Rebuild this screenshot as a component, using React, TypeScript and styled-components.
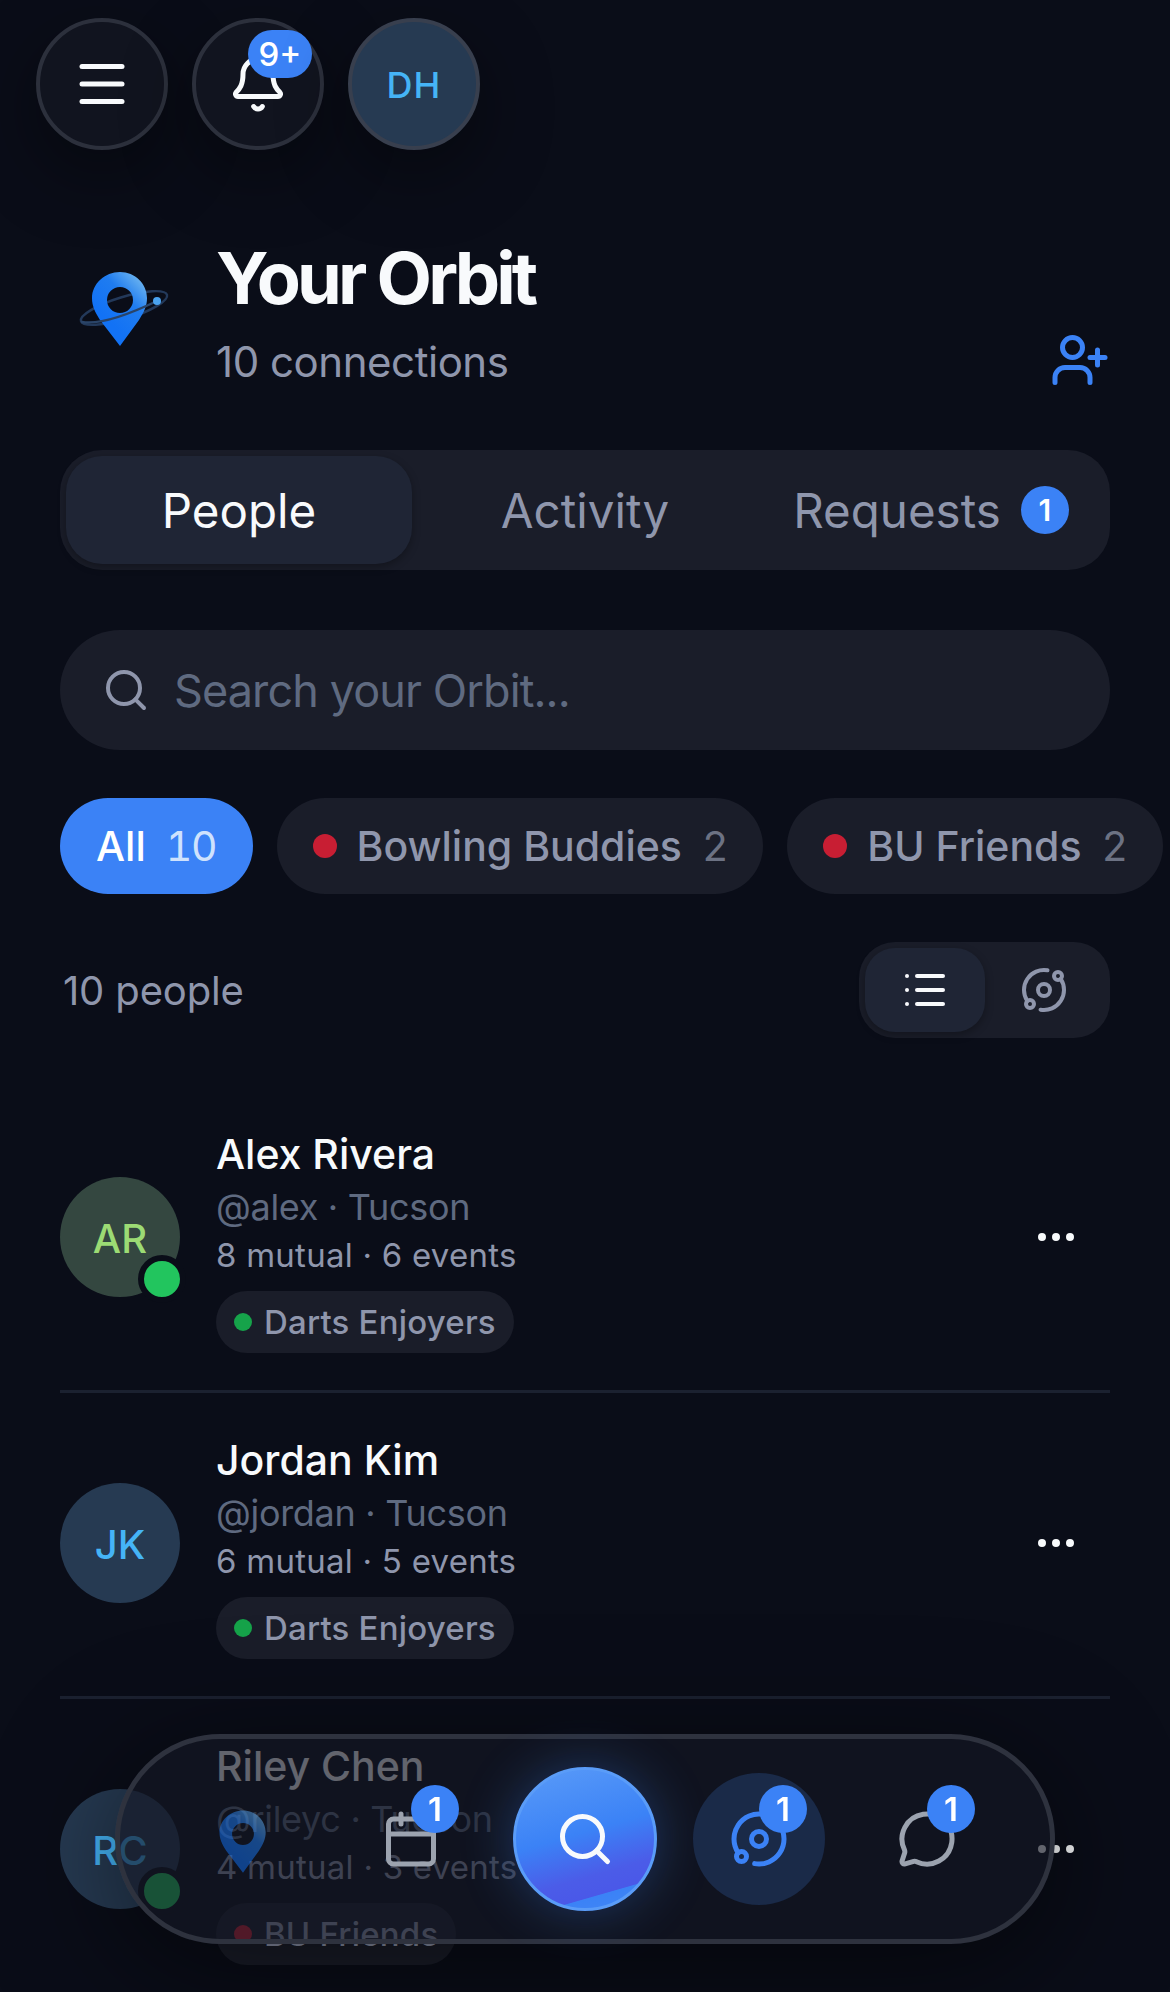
import React from "react";
import styled, { createGlobalStyle } from "styled-components";
import { Menu, Bell, UserPlus, Search, List, Orbit, Ellipsis, Calendar, MessageCircle } from "lucide-react";

const Global = createGlobalStyle`
  html, body { margin: 0; padding: 0; background: #0a0d18; }
  body { font-family: Inter, "Liberation Sans", sans-serif; color: #f8fafc; }
  * { box-sizing: border-box; }
  #root { width: 1170px; height: 1992px; overflow: hidden; position: relative; }
`;

const Page = styled.div`
  display: flex;
  flex-direction: column;
  width: 1170px;
`;

const TopBar = styled.div`
  display: flex;
  gap: 24px;
  padding: 18px 36px 0;
`;

const RoundButton = styled.div`
  position: relative;
  width: 132px;
  height: 132px;
  border-radius: 50%;
  background: #11141f;
  border: 4px solid #2c303c;
  box-shadow: 0 24px 72px rgba(0, 0, 0, 0.4);
  display: flex;
  align-items: center;
  justify-content: center;
  color: #f8fafc;
`;

const UserButton = styled(RoundButton)`
  background: #263a52;
  border-color: #383f4e;
  color: #45b4f6;
  font-size: 36px;
  font-weight: 500;
  letter-spacing: 1px;
  padding-top: 2px;
`;

const Badge = styled.span`
  position: absolute;
  height: 48px;
  min-width: 48px;
  border-radius: 24px;
  background: #3b82f6;
  color: #fff;
  font-size: 33px;
  font-weight: 600;
  display: flex;
  align-items: center;
  justify-content: center;
`;

const BellBadge = styled(Badge)`
  width: 64px;
  top: 8px;
  right: 8px;
  font-weight: 500;
`;

const Header = styled.div`
  display: flex;
  padding: 0 60px;
  margin-top: 89px;
  height: 176px;
`;

const LogoBox = styled.div`
  width: 156px;
  flex: none;
  padding: 30px 0 0 10px;
`;

const HeaderText = styled.div`
  flex: 1;
  display: flex;
  flex-direction: column;
`;

const Title = styled.h1`
  margin: 0;
  font-size: 72px;
  line-height: 78px;
  font-weight: 700;
  letter-spacing: -3.9px;
  color: #f8fafc;
`;

const Subtitle = styled.div`
  margin-top: 15px;
  font-size: 42px;
  line-height: 60px;
  letter-spacing: -0.45px;
  color: #8f96ac;
`;

const AddFriend = styled.div`
  align-self: flex-end;
  color: #3b82f6;
  height: 60px;
  margin-bottom: 25px;
`;

const Tabs = styled.div`
  margin: 35px 60px 0;
  height: 120px;
  border-radius: 42px;
  background: #1a1d29;
  padding: 6px;
  display: flex;
`;

const Tab = styled.div<{ $active?: boolean }>`
  flex: 1;
  border-radius: 36px;
  display: flex;
  align-items: center;
  justify-content: center;
  gap: 20px;
  font-size: 47.5px;
  font-weight: 400;
  color: ${(p) => (p.$active ? "#f8fafc" : "#8f96ac")};
  background: ${(p) => (p.$active ? "#1f2535" : "transparent")};
  box-shadow: ${(p) => (p.$active ? "0 3px 9px rgba(0, 0, 0, 0.3)" : "none")};
`;

const TabBadge = styled.span`
  width: 48px;
  height: 48px;
  border-radius: 50%;
  background: #3b82f6;
  color: #fff;
  font-size: 30px;
  font-weight: 600;
  display: flex;
  align-items: center;
  justify-content: center;
`;

const SearchField = styled.div`
  margin: 60px 60px 0;
  height: 120px;
  border-radius: 60px;
  background: #1a1d29;
  padding: 0 42px;
  display: flex;
  align-items: center;
  gap: 24px;
  color: #8f96ac;
`;

const Placeholder = styled.span`
  font-size: 45px;
  letter-spacing: -0.9px;
  color: #5f6a80;
`;

const ChipRow = styled.div`
  display: flex;
  gap: 24px;
  margin: 48px 0 0 60px;
  width: 1400px;
`;

const Chip = styled.div<{ $active?: boolean }>`
  height: 96px;
  border-radius: 48px;
  padding: 0 36px;
  display: flex;
  align-items: center;
  font-size: 41px;
  font-weight: 500;
  color: ${(p) => (p.$active ? "#fff" : "#8f96ac")};
  background: ${(p) => (p.$active ? "#3b82f6" : "#1a1d29")};
`;

const ChipDot = styled.span`
  width: 24px;
  height: 24px;
  border-radius: 50%;
  background: #c81e33;
  margin-right: 20px;
`;

const ChipCount = styled.span<{ $active?: boolean }>`
  margin-left: 20px;
  font-weight: 400;
  font-variant-numeric: tabular-nums;
  letter-spacing: -1.2px;
  color: ${(p) => (p.$active ? "#cfe2fd" : "#6c7283")};
`;

const CountBar = styled.div`
  display: flex;
  align-items: center;
  justify-content: space-between;
  margin: 48px 60px 0 63px;
`;

const CountLabel = styled.span`
  font-size: 40px;
  letter-spacing: -0.15px;
  color: #8f96ac;
`;

const Toggle = styled.div`
  width: 251px;
  height: 96px;
  border-radius: 36px;
  background: #1a1d29;
  padding: 6px;
  display: flex;
`;

const ToggleItem = styled.div<{ $active?: boolean }>`
  width: 120px;
  height: 84px;
  border-radius: 30px;
  display: flex;
  align-items: center;
  justify-content: center;
  color: ${(p) => (p.$active ? "#f8fafc" : "#8f96ac")};
  background: ${(p) => (p.$active ? "#1f2535" : "transparent")};
  box-shadow: ${(p) => (p.$active ? "0 3px 9px rgba(0, 0, 0, 0.3)" : "none")};
`;

const PeopleList = styled.div`
  margin: 49px 60px 0;
  display: flex;
  flex-direction: column;
`;

const Row = styled.div`
  display: flex;
  align-items: center;
  height: 306px;
  padding: 39px 0 37px;
  border-bottom: 3px solid #1b2130;
`;

const Avatar = styled.div<{ $bg: string; $fg: string }>`
  position: relative;
  flex: none;
  width: 120px;
  height: 120px;
  margin-bottom: 6px;
  padding-top: 3px;
  border-radius: 50%;
  background: ${(p) => p.$bg};
  color: ${(p) => p.$fg};
  font-size: 40px;
  font-weight: 500;
  display: flex;
  align-items: center;
  justify-content: center;
`;

const Online = styled.span`
  position: absolute;
  right: -6px;
  bottom: -6px;
  width: 48px;
  height: 48px;
  border-radius: 50%;
  background: #22c55e;
  border: 6px solid #0a0d18;
`;

const Info = styled.div`
  flex: 1;
  margin-left: 36px;
  display: flex;
  flex-direction: column;
  align-items: flex-start;
`;

const Name = styled.div`
  font-size: 41px;
  line-height: 54px;
  font-weight: 500;
  color: #f8fafc;
`;

const Handle = styled.div`
  margin-top: 3px;
  font-size: 36px;
  line-height: 46px;
  letter-spacing: -0.3px;
  color: #5f6a80;
`;

const Stats = styled.div`
  margin-top: 1px;
  font-size: 33px;
  line-height: 48px;
  letter-spacing: 0.25px;
  color: #8f96ac;
`;

const GroupChip = styled.div`
  margin-top: 12px;
  height: 62px;
  border-radius: 31px;
  padding: 0 18px;
  background: #1a1d29;
  display: flex;
  align-items: center;
  gap: 12px;
  font-size: 33px;
  font-weight: 500;
  letter-spacing: 0.2px;
  color: #8f96ac;
`;

const GroupDot = styled.span<{ $color: string }>`
  width: 18px;
  height: 18px;
  border-radius: 50%;
  background: ${(p) => p.$color};
`;

const MoreButton = styled.div`
  width: 78px;
  margin-bottom: 6px;
  color: #f8fafc;
  display: flex;
  justify-content: flex-start;

  svg circle {
    fill: currentColor;
  }
`;

const Nav = styled.div`
  position: fixed;
  left: 115px;
  bottom: 48px;
  width: 940px;
  height: 210px;
  border-radius: 105px;
  border: 5px solid #2e323e;
  background: rgba(20, 23, 35, 0.66);
  box-shadow: 0 24px 120px rgba(0, 0, 0, 0.55);
  display: flex;
  align-items: center;
  justify-content: center;
  gap: 36px;
`;

const NavItem = styled.div<{ $active?: boolean }>`
  position: relative;
  width: 132px;
  height: 132px;
  border-radius: 50%;
  display: flex;
  align-items: center;
  justify-content: center;
  color: ${(p) => (p.$active ? "#3b82f6" : "#9ca3af")};
  background: ${(p) => (p.$active ? "#1a2a48" : "transparent")};
`;

const NavBadge = styled(Badge)`
  left: 66px;
  top: 12px;
  font-size: 33px;
`;

const SearchFab = styled.div`
  width: 144px;
  height: 144px;
  border-radius: 50%;
  border: 3px solid #5a9cf8;
  background: linear-gradient(164deg, #5a9bf8 0%, #3b82f6 46%, #4b5ce8 72%, #4a58e8 83.5%, #3b82f6 84%, #4287f6 100%);
  box-shadow: 0 0 54px rgba(59, 130, 246, 0.32);
  color: #f8fafc;
  display: flex;
  align-items: center;
  justify-content: center;
`;

const DimmedPin = styled.div`
  opacity: 0.5;
  display: flex;
  margin-top: 6px;
`;

const PinLogo = ({ size = 100, ring = true }: { size?: number; ring?: boolean }) => (
  <svg width={size} height={(size * 80) / 100} viewBox="0 0 100 80" fill="none">
    <defs>
      <linearGradient id={ring ? "pinA" : "pinB"} x1="0.85" y1="0.05" x2="0.35" y2="0.7">
        <stop offset="0" stopColor="#6cb4f0" />
        <stop offset="0.45" stopColor="#1f7cf0" />
        <stop offset="1" stopColor="#1272f5" />
      </linearGradient>
    </defs>
    {ring && (
      <ellipse cx="54" cy="39" rx="45" ry="11" transform="rotate(-17 54 39)" stroke="#23395a" strokeWidth="2.4" />
    )}
    <path
      fillRule="evenodd"
      d="M50 3C34.800 3 22 15 22 29c0 8 3 14 8 22l20 26 19-26c5-8 8-14 8-22C77 15 65.200 3 50 3zm0 15a13 13 0 1 1 0 26 13 13 0 0 1 0-26z"
      fill={`url(#${ring ? "pinA" : "pinB"})`}
    />
    {ring && (
      <>
        <path d="M12 53C30 56 62 44 87 32" stroke="#2a4468" strokeWidth="2.400" strokeLinecap="round" />
        <circle cx="87" cy="32" r="4" fill="#4aa3f0" />
      </>
    )}
  </svg>
);

const people = [
  {
    name: "Alex Rivera", handle: "@alex · Tucson", stats: "8 mutual · 6 events", initials: "AR",
    bg: "#344740", fg: "#9cdb74", online: true, group: "Darts Enjoyers", dot: "#16a34a",
  },
  {
    name: "Jordan Kim", handle: "@jordan · Tucson", stats: "6 mutual · 5 events", initials: "JK",
    bg: "#263a52", fg: "#45b4f6", online: false, group: "Darts Enjoyers", dot: "#16a34a",
  },
  {
    name: "Riley Chen", handle: "@rileyc · Tucson", stats: "4 mutual · 3 events", initials: "RC",
    bg: "#263a52", fg: "#45b4f6", online: true, group: "BU Friends", dot: "#c81e33",
  },
];

export default function App() {
  return (
    <>
      <Global />
      <Page>
        <TopBar>
          <RoundButton>
            <Menu size={60} strokeWidth={2} />
          </RoundButton>
          <RoundButton>
            <Bell size={60} strokeWidth={2} />
            <BellBadge>9+</BellBadge>
          </RoundButton>
          <UserButton>DH</UserButton>
        </TopBar>

        <Header>
          <LogoBox>
            <PinLogo />
          </LogoBox>
          <HeaderText>
            <Title>Your Orbit</Title>
            <Subtitle>10 connections</Subtitle>
          </HeaderText>
          <AddFriend>
            <UserPlus size={60} strokeWidth={2} />
          </AddFriend>
        </Header>

        <Tabs>
          <Tab $active>People</Tab>
          <Tab>Activity</Tab>
          <Tab>
            Requests
            <TabBadge>1</TabBadge>
          </Tab>
        </Tabs>

        <SearchField>
          <Search size={48} strokeWidth={2} />
          <Placeholder>Search your Orbit...</Placeholder>
        </SearchField>

        <ChipRow>
          <Chip $active>
            All<ChipCount $active>10</ChipCount>
          </Chip>
          <Chip>
            <ChipDot />
            Bowling Buddies<ChipCount>2</ChipCount>
          </Chip>
          <Chip>
            <ChipDot />
            BU Friends<ChipCount>2</ChipCount>
          </Chip>
        </ChipRow>

        <CountBar>
          <CountLabel>10 people</CountLabel>
          <Toggle>
            <ToggleItem $active>
              <List size={48} strokeWidth={2} />
            </ToggleItem>
            <ToggleItem>
              <Orbit size={48} strokeWidth={2} />
            </ToggleItem>
          </Toggle>
        </CountBar>

        <PeopleList>
          {people.map((p) => (
            <Row key={p.name}>
              <Avatar $bg={p.bg} $fg={p.fg}>
                {p.initials}
                {p.online && <Online />}
              </Avatar>
              <Info>
                <Name>{p.name}</Name>
                <Handle>{p.handle}</Handle>
                <Stats>{p.stats}</Stats>
                <GroupChip>
                  <GroupDot $color={p.dot} />
                  {p.group}
                </GroupChip>
              </Info>
              <MoreButton>
                <Ellipsis size={48} strokeWidth={2} />
              </MoreButton>
            </Row>
          ))}
        </PeopleList>
      </Page>

      <Nav>
        <NavItem>
          <DimmedPin>
            <PinLogo size={84} ring={false} />
          </DimmedPin>
        </NavItem>
        <NavItem>
          <Calendar size={60} strokeWidth={2} />
          <NavBadge>1</NavBadge>
        </NavItem>
        <SearchFab>
          <Search size={60} strokeWidth={2} />
        </SearchFab>
        <NavItem $active>
          <Orbit size={60} strokeWidth={2} />
          <NavBadge>1</NavBadge>
        </NavItem>
        <NavItem>
          <MessageCircle size={60} strokeWidth={2} />
          <NavBadge>1</NavBadge>
        </NavItem>
      </Nav>
    </>
  );
}
